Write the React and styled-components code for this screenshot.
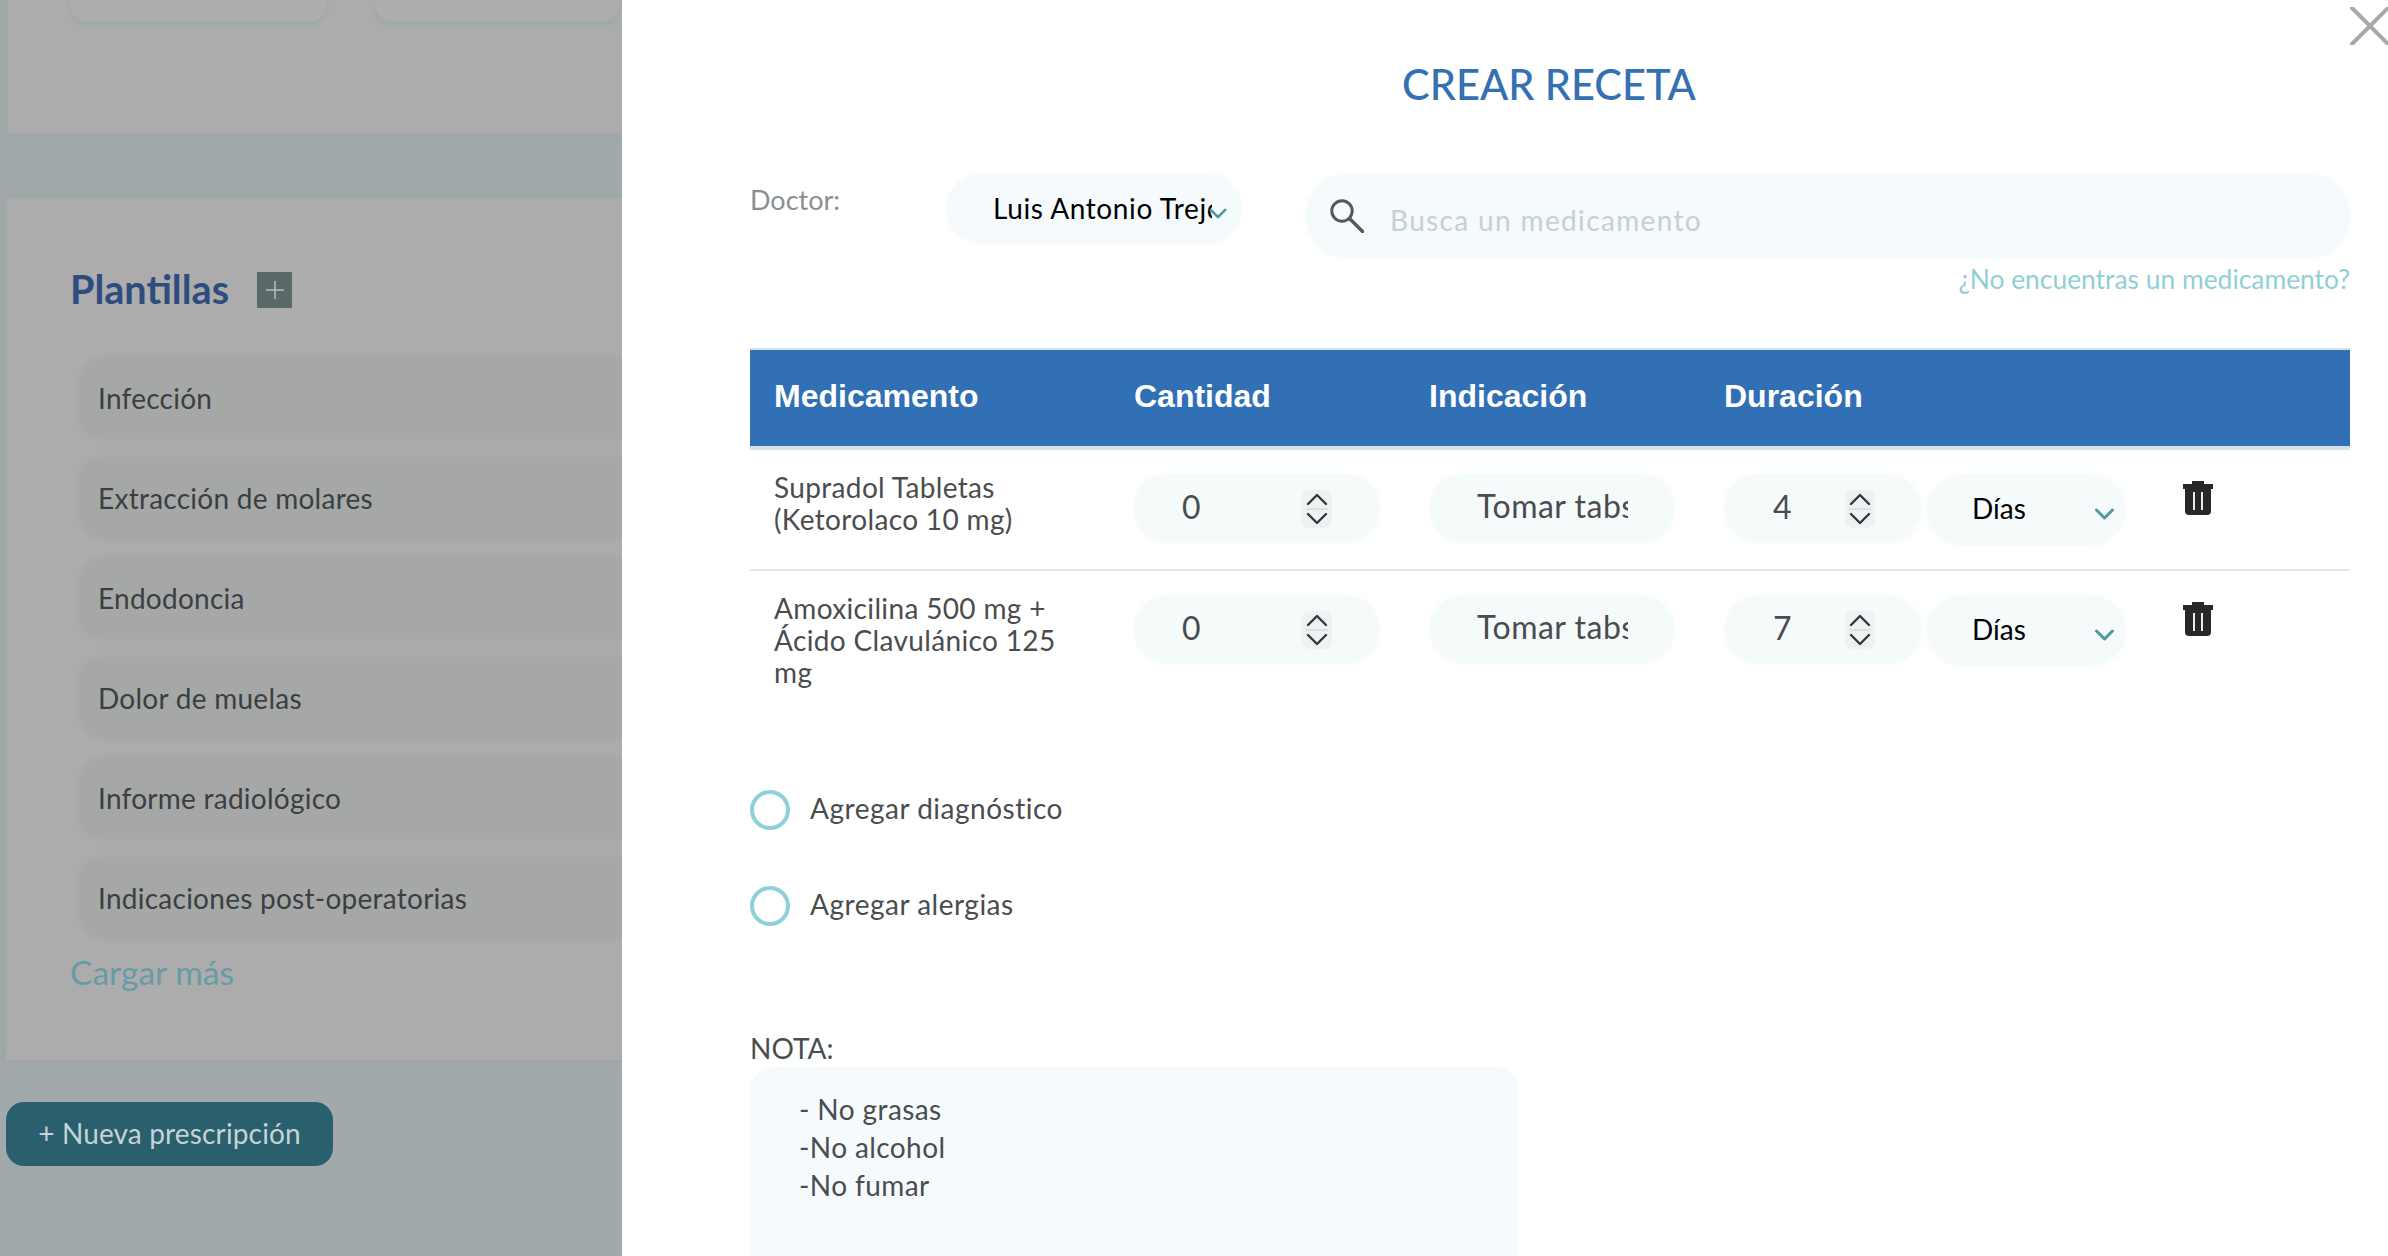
import React from 'react';
import styled, { createGlobalStyle } from 'styled-components';

const GlobalStyle = createGlobalStyle`
  * { box-sizing: border-box; }
  html, body { margin: 0; padding: 0; height: 100%; }
  body { font-family: 'Lato', 'Noto Sans', sans-serif; overflow: hidden; background: #fff; }
`;

const Page = styled.div`
  display: flex;
  width: 2388px;
  height: 1256px;
  overflow: hidden;
`;

/* ---- dimmed page behind the drawer ---- */
const Behind = styled.aside`
  width: 622px;
  flex: none;
  height: 100%;
  background: #a2a9ab;
  padding-left: 6px;
  overflow: hidden;
`;
const TopCard = styled.div`
  height: 133px;
  margin-left: 2px;
  background: #acacac;
  box-shadow: 0 0 6px rgba(150, 160, 160, 0.6);
  display: flex;
  gap: 49px;
  padding-left: 62px;
`;
const MiniCard = styled.div`
  width: ${(p) => p.$width}px;
  height: 22px;
  background: #aeadad;
  border-radius: 0 0 18px 18px;
  box-shadow: 0 3px 5px rgba(140, 170, 165, 0.7);
`;
const TemplatesCard = styled.section`
  margin-top: 65px;
  height: 862px;
  background: #acacac;
  padding: 74px 0 0 66px;
  box-shadow: 0 0 6px rgba(150, 160, 160, 0.5);
`;
const TemplatesHead = styled.div`
  display: flex;
  align-items: center;
  gap: 28px;
  height: 36px;
  margin-bottom: 50px;
`;
const TemplatesTitle = styled.h2`
  margin: -3px 0 0 -2px;
  font-size: 39.6px;
  font-weight: 700;
  color: #2c4d7e;
`;
const PlusBox = styled.span`
  width: 35px;
  height: 36px;
  background: #5b6869;
  display: flex;
  align-items: center;
  justify-content: center;
`;
const TemplateList = styled.div`
  display: flex;
  flex-direction: column;
  gap: 20px;
  margin-left: 10px;
`;
const TemplateItem = styled.div`
  height: 80px;
  border-radius: 24px 0 0 24px;
  background: #a6a8a8;
  box-shadow: -2px 0 6px rgba(160, 162, 162, 0.8);
  padding-left: 16px;
  display: flex;
  align-items: center;
  font-size: 28px;
  letter-spacing: 0.26px;
  color: #3b3f42;
  white-space: nowrap;
`;
const LoadMore = styled.div`
  margin: 14px 0 0 -2px;
  font-size: 33.6px;
  line-height: 40px;
  color: #659ca5;
`;
const NewButton = styled.button`
  display: block;
  margin-top: 42px;
  width: 327px;
  height: 64px;
  border: 0;
  border-radius: 18px;
  background: #2a5f6e;
  color: #c5d3d6;
  font: 400 28px 'Lato', sans-serif;
  letter-spacing: 0.15px;
  text-align: center;
  padding: 0 0 3px;
`;

/* ---- drawer ---- */
const Drawer = styled.main`
  position: relative;
  flex: 1;
  height: 100%;
  background: #fff;
  padding: 0 38px 0 128px;
  overflow: hidden;
`;
const CloseIcon = styled.svg`
  position: absolute;
  top: 7px;
  left: 1728px;
`;
const Title = styled.h1`
  margin: 0;
  padding: 60px 2px 0 0;
  text-align: center;
  font-size: 41.5px;
  line-height: 48px;
  font-weight: 500;
  color: #3470b2;
`;
const FormRow = styled.div`
  display: flex;
  align-items: flex-start;
  margin-top: 66px;
`;
const DoctorLabel = styled.label`
  width: 197px;
  flex: none;
  margin-top: 10px;
  font-size: 27px;
  line-height: 32px;
  color: #8a8f92;
`;
const DoctorSelect = styled.div`
  position: relative;
  width: 294px;
  height: 69px;
  flex: none;
  margin-right: 65px;
  border-radius: 34px;
  background: #f5fafc;
  padding: 0 29px 1px 46px;
  display: flex;
  align-items: center;
  font-size: 28px;
  letter-spacing: 0.6px;
  color: #000;
  overflow: hidden;
  white-space: nowrap;
  box-shadow: 0 0 4px rgba(240, 246, 250, 0.9);
`;
const DoctorName = styled.span`
  display: block;
  overflow: hidden;
`;
const DoctorChevron = styled.svg`
  position: absolute;
  left: 262px;
  top: 34px;
`;
const SearchColumn = styled.div`
  flex: 1;
  display: flex;
  flex-direction: column;
  align-items: flex-end;
`;
const SearchBox = styled.div`
  width: 100%;
  height: 84px;
  border-radius: 42px;
  background: #f5fafc;
  padding-left: 24px;
  display: flex;
  align-items: center;
  gap: 24px;
  box-shadow: 0 0 4px rgba(240, 246, 250, 0.9);
`;
const SearchInput = styled.input`
  flex: 1;
  min-width: 0;
  border: 0;
  outline: 0;
  background: transparent;
  font: 400 28px 'Lato', sans-serif;
  letter-spacing: 1.35px;
  margin-top: 8px;
  &::placeholder { color: #c5d0d6; opacity: 1; }
`;
const MissingLink = styled.a`
  margin-top: 5px;
  font-size: 26.4px;
  line-height: 32px;
  color: #8fd0d6;
`;

const Table = styled.section`
  margin-top: 53px;
`;
const TableHead = styled.div`
  display: grid;
  grid-template-columns: 360px 295px 295px 1fr;
  align-items: center;
  height: 102px;
  padding: 0 0 3px 24px;
  background: #3270b5;
  border-top: 2px solid #d5e3ea;
  border-bottom: 4px solid #d5e3ea;
  font: 700 32px 'Liberation Sans', Arial, sans-serif;
  color: #fff;
`;
const TableRow = styled.div`
  display: grid;
  grid-template-columns: 359px 296px 295px 1fr;
  align-items: start;
  padding: 25px 0 0 25px;
  height: ${(p) => p.$height}px;
  border-bottom: ${(p) => (p.$last ? '0' : '2px solid #e4e7e8')};
`;
const MedName = styled.div`
  margin: -4px 0 0 -1px;
  width: 310px;
  font-size: 28px;
  letter-spacing: 0.35px;
  line-height: 32px;
  color: #4a4d50;
`;
const Pill = styled.div`
  display: flex;
  align-items: center;
  height: 67px;
  border-radius: 33px;
  background: #f5fafb;
  box-shadow: 0 0 4px rgba(240, 246, 250, 0.9);
`;
const NumberPill = styled(Pill)`
  width: ${(p) => p.$width}px;
  flex: none;
  padding-left: 48px;
`;
const NumberValue = styled.span`
  width: ${(p) => p.$width}px;
  flex: none;
  margin-top: -5px;
  font-size: 32px;
  color: #4a4d50;
`;
const Spinner = styled.span`
  width: 30px;
  height: 38px;
  flex: none;
  border-radius: 7px;
  background: #eef2f3;
  display: flex;
`;
const TextPill = styled(Pill)`
  width: 244px;
  padding: 0 46px 6px 47px;
`;
const TextValue = styled.input`
  width: 100%;
  border: 0;
  outline: 0;
  background: transparent;
  padding: 0;
  font: 400 32px 'Lato', sans-serif;
  letter-spacing: 0.5px;
  color: #4a4d50;
`;
const DurationCell = styled.div`
  display: flex;
  align-items: flex-start;
  gap: 6px;
`;
const UnitSelect = styled(Pill)`
  position: relative;
  width: 198px;
  height: 70px;
  flex: none;
  border-radius: 35px;
  padding: 0 0 4px 45px;
  font-size: 28px;
  color: #000;
`;
const UnitChevron = styled.svg`
  position: absolute;
  left: 167px;
  top: 33px;
`;
const TrashButton = styled.button`
  border: 0;
  padding: 0;
  background: none;
  margin: 6px 0 0 52px;
  height: 34px;
`;

const OptionList = styled.div`
  display: flex;
  flex-direction: column;
  gap: 56px;
  margin-top: 69px;
`;
const Option = styled.label`
  display: flex;
  align-items: center;
  gap: 20px;
  height: 40px;
  font-size: 28px;
  letter-spacing: 0.5px;
  color: #4a4d50;
`;
const OptionText = styled.span`
  margin-top: -4px;
`;
const Circle = styled.span`
  width: 40px;
  height: 40px;
  border-radius: 50%;
  border: 4px solid #8fd0dc;
  flex: none;
`;
const NoteLabel = styled.div`
  margin-top: 106px;
  font-size: 28px;
  line-height: 32px;
  color: #4a4d50;
`;
const NoteBox = styled.div`
  margin-top: 3px;
  width: 768px;
  height: 300px;
  border-radius: 24px;
  background: #f5fafd;
  padding: 23px 49px;
  font-size: 28px;
  letter-spacing: 0.4px;
  line-height: 38px;
  color: #4a4d50;
  white-space: pre-line;
`;

const Chevron = ({ width, height, color, as: Tag = 'svg', ...rest }) => (
  <Tag width={width} height={height} viewBox="0 0 20 12" fill="none" {...rest}>
    <path d="M2 2l8 8 8-8" stroke={color} strokeWidth="3" strokeLinecap="round" strokeLinejoin="round" />
  </Tag>
);

const SpinnerIcon = () => (
  <svg width="30" height="38" viewBox="0 0 30 38" fill="none">
    <path d="M6 14l9-9 9 9M6 24l9 9 9-9" stroke="#33373a" strokeWidth="2.4" strokeLinecap="round" strokeLinejoin="round" />
    <path d="M4 19h22" stroke="#dde1e2" strokeWidth="2" />
  </svg>
);

const TrashIcon = () => (
  <svg width="30" height="34" viewBox="0 0 30 34">
    <path d="M9 0h12v3h9v5H0V3h9z" fill="#26282a" />
    <path d="M2 8h26v22a4 4 0 0 1-4 4H6a4 4 0 0 1-4-4z" fill="#26282a" />
    <path d="M11 11v18M19 11v18" stroke="#fff" strokeWidth="1.8" />
  </svg>
);

const templates = [
  'Infección',
  'Extracción de molares',
  'Endodoncia',
  'Dolor de muelas',
  'Informe radiológico',
  'Indicaciones post-operatorias',
];

const meds = [
  { name: 'Supradol Tabletas (Ketorolaco 10 mg)', days: 4, height: 121 },
  { name: 'Amoxicilina 500 mg + Ácido Clavulánico 125 mg', days: 7, height: 150, last: true },
];

const App = () => (
  <>
    <GlobalStyle />
    <Page>
      <Behind>
        <TopCard>
          <MiniCard $width={256} />
          <MiniCard $width={245} />
        </TopCard>
        <TemplatesCard>
          <TemplatesHead>
            <TemplatesTitle>Plantillas</TemplatesTitle>
            <PlusBox>
              <svg width="18" height="18" viewBox="0 0 18 18">
                <path d="M9 0v18M0 9h18" stroke="#b5bfc0" strokeWidth="1.5" />
              </svg>
            </PlusBox>
          </TemplatesHead>
          <TemplateList>
            {templates.map((t) => (
              <TemplateItem key={t}>{t}</TemplateItem>
            ))}
          </TemplateList>
          <LoadMore>Cargar más</LoadMore>
        </TemplatesCard>
        <NewButton>+ Nueva prescripción</NewButton>
      </Behind>

      <Drawer>
        <CloseIcon width="60" height="38" viewBox="0 0 60 38" fill="none">
          <path d="M2 1l36 36M38 1L2 37" stroke="#a8a8a8" strokeWidth="4" strokeLinecap="round" />
        </CloseIcon>
        <Title>CREAR RECETA</Title>
        <FormRow>
          <DoctorLabel>Doctor:</DoctorLabel>
          <DoctorSelect>
            <DoctorName>Luis Antonio Trejo Sánchez</DoctorName>
            <Chevron as={DoctorChevron} width="18" height="11" color="#4d9a9f" />
          </DoctorSelect>
          <SearchColumn>
            <SearchBox>
              <svg width="34" height="34" viewBox="0 0 34 34" fill="none">
                <circle cx="12" cy="12" r="10.2" stroke="#55585b" strokeWidth="3" />
                <path d="M20 20l12.5 12.5" stroke="#55585b" strokeWidth="3.4" strokeLinecap="round" />
              </svg>
              <SearchInput placeholder="Busca un medicamento" readOnly />
            </SearchBox>
            <MissingLink>¿No encuentras un medicamento?</MissingLink>
          </SearchColumn>
        </FormRow>

        <Table>
          <TableHead>
            <span>Medicamento</span>
            <span>Cantidad</span>
            <span>Indicación</span>
            <span>Duración</span>
          </TableHead>
          {meds.map((med) => (
            <TableRow key={med.name} $height={med.height} $last={med.last}>
              <MedName>{med.name}</MedName>
              <NumberPill $width={245}>
                <NumberValue $width={120}>0</NumberValue>
                <Spinner><SpinnerIcon /></Spinner>
              </NumberPill>
              <TextPill>
                <TextValue readOnly value="Tomar tabs cada 8 horas" />
              </TextPill>
              <DurationCell>
                <NumberPill $width={196}>
                  <NumberValue $width={72}>{med.days}</NumberValue>
                  <Spinner><SpinnerIcon /></Spinner>
                </NumberPill>
                <UnitSelect>
                  Días
                  <Chevron as={UnitChevron} width="21" height="12" color="#4d9a9f" />
                </UnitSelect>
                <TrashButton><TrashIcon /></TrashButton>
              </DurationCell>
            </TableRow>
          ))}
        </Table>

        <OptionList>
          <Option><Circle /><OptionText>Agregar diagnóstico</OptionText></Option>
          <Option><Circle /><OptionText>Agregar alergias</OptionText></Option>
        </OptionList>

        <NoteLabel>NOTA:</NoteLabel>
        <NoteBox>{'- No grasas\n-No alcohol\n-No fumar'}</NoteBox>
      </Drawer>
    </Page>
  </>
);

export default App;
